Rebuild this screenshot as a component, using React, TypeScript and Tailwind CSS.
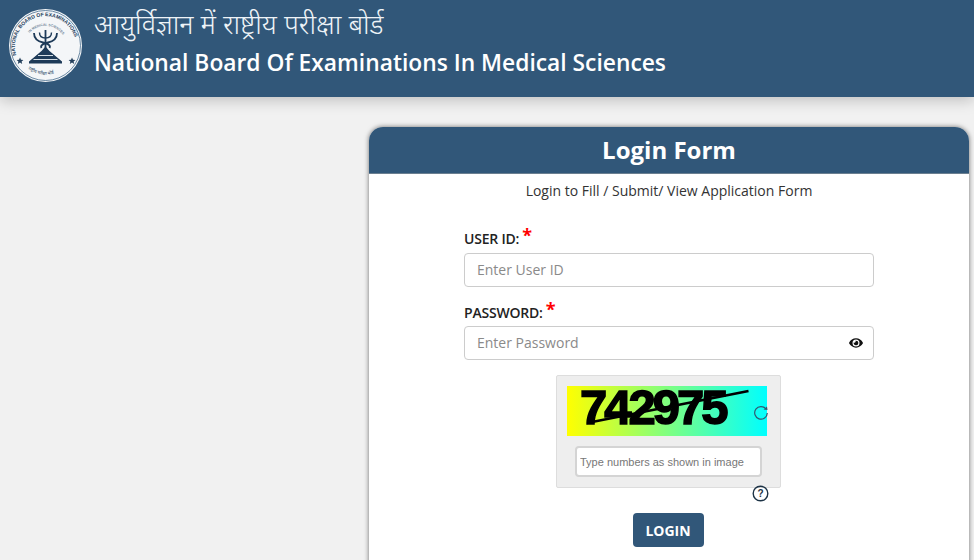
import React from "react";
import { FaEye } from "react-icons/fa";

function Logo() {
  return (
    <svg width="73" height="73" viewBox="0 0 73 73" className="block">
      <circle cx="36.500" cy="36.500" r="36.500" fill="#f4f6f8" />
      <circle cx="36.500" cy="36.500" r="35" fill="none" stroke="#2f5a80" strokeWidth="0.7" />
      <defs>
        <path id="top-arc" d="M7.500 47 A30.500 30.500 0 1 1 65.500 47" />
        <path id="in-arc" d="M17 30 A21 21 0 0 1 56 30" />
        <path id="bot-arc" d="M14 55 A29 29 0 0 0 59 55" />
      </defs>
      <text fontSize="5.100" fontWeight="700" fill="#24405c" fontFamily="'Liberation Sans', sans-serif">
        <textPath href="#top-arc" startOffset="1">NATIONAL BOARD OF EXAMINATIONS</textPath>
      </text>
      <text fontSize="3.400" fontWeight="700" fill="#6d8296" fontFamily="'Liberation Sans', sans-serif">
        <textPath href="#in-arc" startOffset="7">IN MEDICAL SCIENCES</textPath>
      </text>
      <text fontSize="4.400" fill="#24405c" fontFamily="'Noto Sans', sans-serif">
        <textPath href="#bot-arc" startOffset="7">राष्ट्रीय परीक्षा बोर्ड</textPath>
      </text>
      <path d="M36.500 21V41" stroke="#1d3a58" strokeWidth="1.800" />
      <path d="M25 24c0 6 4.500 8.500 9 9.500 5 1.100 8 3 6.500 5.500M48 24c0 6-4.500 8.500-9 9.500-5 1.100-8 3-6.500 5.500" fill="none" stroke="#1d3a58" strokeWidth="1.800" />
      <path d="M30.500 23.500c0 3.500 2.500 5.500 6 5.500s6-2 6-5.500" fill="none" stroke="#1d3a58" strokeWidth="1.400" />
      <path d="M36.500 37.500L40.500 42L53 52.500V54.500H20V52.500L32.500 42z" fill="#1d3a58" />
      <path d="M29 46.500h15M24.500 50.500h24" stroke="#e8eef3" strokeWidth="0.900" />
      <path d="M11 48.500l1 2.300 2.400.2-1.800 1.500.6 2.400-2.200-1.300-2.200 1.300.6-2.400-1.800-1.500 2.400-.2zM63 48.500l1 2.300 2.400.2-1.800 1.500.6 2.400-2.200-1.300-2.200 1.300.6-2.400-1.800-1.500 2.400-.2z" fill="#24405c" />
    </svg>
  );
}

function Req() {
  return <span className="text-[#f00] text-[18px] font-bold leading-none relative -top-[3px] ml-[3px]">*</span>;
}

export default function App() {
  return (
    <div className="h-[560px] overflow-hidden bg-[#f1f1f1] font-['Open_Sans',sans-serif]">
      <header className="h-[97px] bg-[#315779] flex items-center pl-[9px] pb-[6px] shadow-[0_3px_14px_rgba(0,0,0,0.22)] relative">
        <Logo />
        <div className="ml-[12px] text-white -mt-[6px]">
          <div className="text-[27.2px] leading-[34px] font-light font-['Noto_Sans',sans-serif] text-[#eef3f7]">आयुर्विज्ञान में राष्ट्रीय परीक्षा बोर्ड</div>
          <div className="text-[22.8px] leading-[32px] font-semibold mt-[6px] whitespace-nowrap">National Board Of Examinations In Medical Sciences</div>
        </div>
      </header>
      <main className="flex justify-end pr-[5px] pt-[30px]">
        <section className="w-[600px] h-[500px] bg-white rounded-t-[14px] shadow-[0_0_5px_rgba(0,0,0,0.55)]">
          <div className="h-[47px] bg-[#315779] rounded-t-[14px] border-b border-[#6b7f90] flex items-center justify-center text-white text-[24px] font-bold">
            Login Form
          </div>
          <p className="text-center text-[14px] leading-[20px] mt-[7px] text-[#333]">Login to Fill / Submit/ View Application Form</p>
          <div className="ml-[95px] w-[410px] mt-[25px]">
            <label className="flex items-center h-[24px] text-[14px] font-semibold text-[#222] tracking-[-0.2px]">USER ID:<Req /></label>
            <input
              placeholder="Enter User ID"
              className="mt-[3px] block w-full h-[34px] border border-[#ccc] rounded-[4px] px-[12px] pb-[2px] text-[14px] bg-white outline-none placeholder:text-[#8a8a8a]"
            />
            <label className="flex items-center h-[24px] mt-[13px] text-[14px] font-semibold text-[#222] tracking-[-0.2px]">PASSWORD:<Req /></label>
            <div className="relative mt-[2px]">
              <input
                placeholder="Enter Password"
                className="block w-full h-[34px] border border-[#ccc] rounded-[4px] px-[12px] pb-[2px] text-[14px] bg-white outline-none placeholder:text-[#8a8a8a]"
              />
              <FaEye className="absolute right-[11px] top-[10px] text-[#111] text-[14px]" />
            </div>
          </div>
          <div className="ml-[187px] mt-[15px] w-[225px] h-[113px] bg-[#eee] border border-[#ddd] rounded-[2px] pt-[10px] pl-[10px] relative">
            <div className="relative w-[200px] h-[50px] bg-[linear-gradient(to_right,#ffff00,#00ffff)]">
              <span className="absolute left-[13px] top-[-4px] text-[49px] leading-[50px] font-bold text-black font-['Liberation_Sans',sans-serif] tracking-[-3px] [-webkit-text-stroke:1.5px_black]">742975</span>
              <svg className="absolute inset-0" width="200" height="50" viewBox="0 0 200 50">
                <path d="M20 37L181.500 5" stroke="#000" strokeWidth="2.600" />
              </svg>
            </div>
            <svg width="16" height="16" viewBox="0 0 16 16" className="absolute left-[196px] top-[28px]">
              <path d="M13 5A6.300 6.300 0 1 0 14.300 9" fill="none" stroke="#33566f" strokeWidth="1.200" />
              <path d="M10.500 5.500L14.500 6L14 2.500z" fill="#33566f" />
            </svg>
            <input
              placeholder="Type numbers as shown in image"
              className="block mt-[10px] ml-[8px] w-[187px] h-[31px] bg-white border-2 border-[#d4d4d4] rounded-[4px] px-[3px] text-[11px] font-['Liberation_Sans',sans-serif] outline-none placeholder:text-[#777]"
            />
            <svg width="17" height="17" viewBox="0 0 17 17" className="absolute left-[195px] top-[109px]">
              <circle cx="8.500" cy="8.500" r="7.300" fill="none" stroke="#1c3245" strokeWidth="1.400" />
              <text x="8.500" y="12" textAnchor="middle" fontSize="10" fontWeight="700" fill="#1c3245" fontFamily="'Liberation Sans', sans-serif">?</text>
            </svg>
          </div>
          <div className="flex justify-center mt-[25px] pr-[2px]">
            <button className="w-[71px] h-[34px] bg-[#315779] text-white text-[14px] font-bold rounded-[4px]">LOGIN</button>
          </div>
        </section>
      </main>
    </div>
  );
}
